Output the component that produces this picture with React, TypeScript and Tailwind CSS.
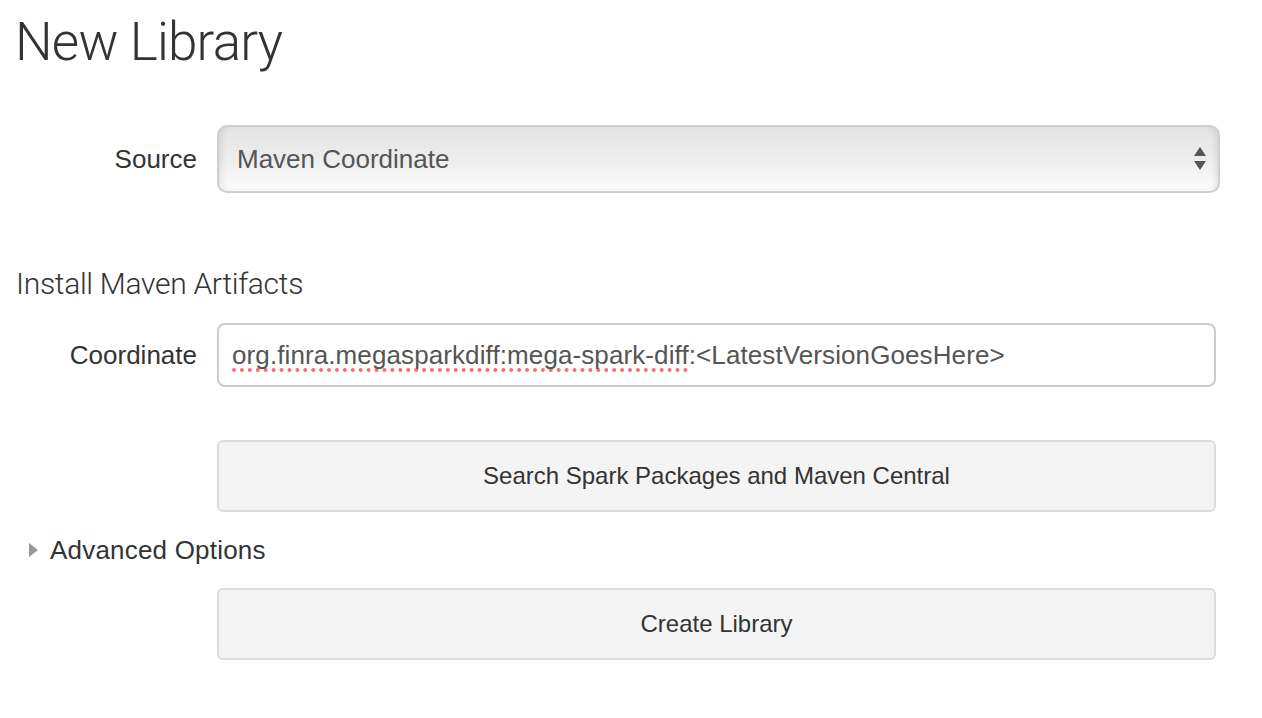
import { FC } from 'react';

const SelectArrows: FC = () => (
  <svg width="14" height="26" viewBox="0 0 14 26" className="shrink-0">
    <path d="M7 1 L13 10 L1 10 Z" fill="#555" />
    <path d="M1 15 L13 15 L7 24 Z" fill="#555" />
  </svg>
);

const App: FC = () => {
  return (
    <div className="w-[1262px] h-[718px] bg-white overflow-hidden font-['Liberation_Sans',Arial,sans-serif] text-[#333]">
      {/* Title */}
      <h1 className="pl-[15px] pt-[9px] h-[125px] text-[53px] leading-[66px] font-light text-[#333] font-['Roboto',sans-serif] tracking-[-0.8px]">
        New Library
      </h1>

      {/* Source row */}
      <div className="flex items-center">
        <label className="w-[197px] text-right text-[26px] leading-[68px]">Source</label>
        <div className="ml-[20px] w-[1003px] h-[68px] flex items-center justify-between pl-[18px] pr-[11px] rounded-[10px] border-2 border-[#cfcfcf] bg-gradient-to-b from-[#e4e4e4] via-[#ededed] to-[#fcfcfc] shadow-[inset_-6px_0_8px_-6px_rgba(0,0,0,0.15),inset_6px_0_8px_-6px_rgba(0,0,0,0.15)]">
          <span className="text-[26px] text-[#555]">Maven Coordinate</span>
          <SelectArrows />
        </div>
      </div>

      {/* Install Maven Artifacts */}
      <h3 className="pl-[16px] mt-[74px] h-[56px] text-[30px] leading-[34px] font-light text-[#333] font-['Roboto',sans-serif] tracking-[-0.3px]">
        Install Maven Artifacts
      </h3>

      {/* Coordinate row */}
      <div className="flex items-center">
        <label className="w-[197px] text-right text-[26px] leading-[64px]">Coordinate</label>
        <div className="ml-[20px] w-[999px] h-[64px] flex items-center px-[13px] rounded-[8px] border-2 border-[#cccccc] bg-white">
          <span className="text-[26px] text-[#555] whitespace-nowrap tracking-[0.1px]">
            <span className="underline decoration-dotted decoration-[#ff6b6b] decoration-[4px] underline-offset-[5px] [text-decoration-skip-ink:none]">
              org.finra.megasparkdiff:mega-spark-diff
            </span>
            :&lt;LatestVersionGoesHere&gt;
          </span>
        </div>
      </div>

      {/* Search button */}
      <div className="pl-[217px] mt-[53px]">
        <button className="w-[999px] h-[72px] rounded-[6px] border-2 border-[#dcdcdc] bg-[#f4f4f4] text-[24px] text-[#333]">
          Search Spark Packages and Maven Central
        </button>
      </div>

      {/* Advanced options */}
      <div className="flex items-center h-[76px] pl-[29px]">
        <svg width="9" height="14" viewBox="0 0 9 14" className="mr-[12px]">
          <path d="M0 0 L9 7 L0 14 Z" fill="#999" />
        </svg>
        <span className="text-[26px] text-[#333] tracking-[0.2px]">Advanced Options</span>
      </div>

      {/* Create button */}
      <div className="pl-[217px]">
        <button className="w-[999px] h-[72px] rounded-[6px] border-2 border-[#dcdcdc] bg-[#f4f4f4] text-[24px] text-[#333]">
          Create Library
        </button>
      </div>
    </div>
  );
};

export default App;
